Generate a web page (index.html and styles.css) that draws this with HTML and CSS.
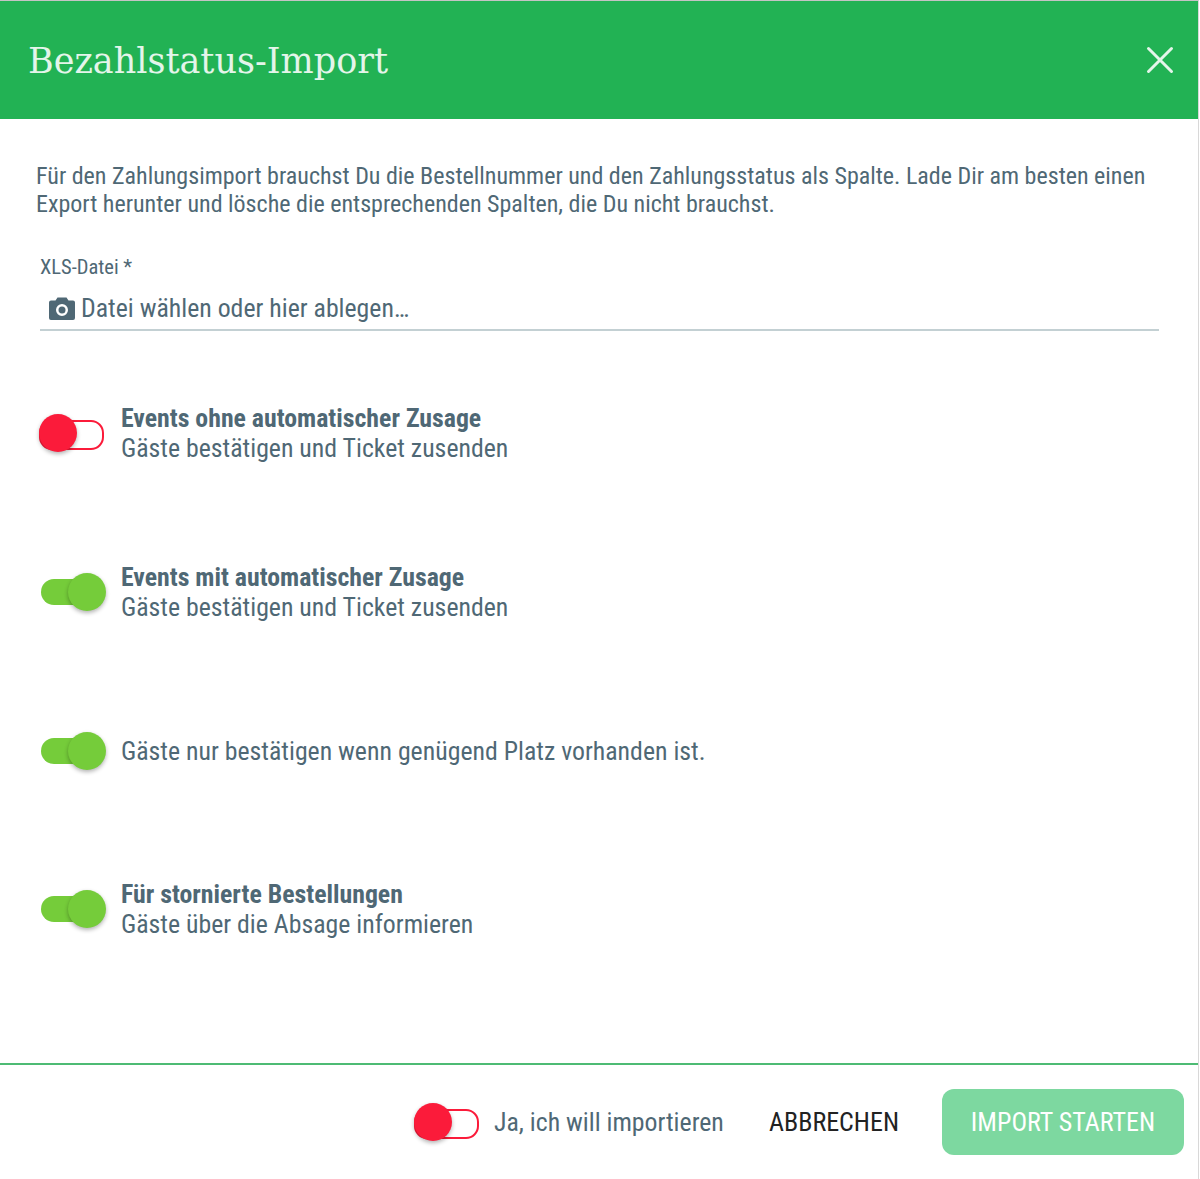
FILE: index.html
```html
<!DOCTYPE html>
<html lang="de">
<head>
  <meta charset="UTF-8">
  <meta name="viewport" content="width=device-width, initial-scale=1.0">
  <title>Bezahlstatus-Import</title>
  <link rel="stylesheet" href="styles.css">
</head>
<body>
  <div class="dialog">
    <header class="dialog-head">
      <h1>Bezahlstatus-Import</h1>
      <svg class="close" width="28" height="28" viewBox="0 0 28 28"><path d="M2.5 2.5L25.5 25.5M25.5 2.5L2.5 25.5" stroke="#e4f5ea" stroke-width="3" stroke-linecap="round"/></svg>
    </header>

    <main class="dialog-body">
      <p class="intro">Für den Zahlungsimport brauchst Du die Bestellnummer und den Zahlungsstatus als Spalte. Lade Dir am besten einen Export herunter und lösche die entsprechenden Spalten, die Du nicht brauchst.</p>

      <div class="file-field">
        <div class="file-label">XLS-Datei *</div>
        <div class="file-input">
          <svg class="camera" width="26" height="24" viewBox="0 0 26 24"><path fill-rule="evenodd" fill="#4f6875" d="M8.5 1.5h9l2 3H24a2 2 0 0 1 2 2V22a2 2 0 0 1-2 2H2a2 2 0 0 1-2-2V6.500a2 2 0 0 1 2-2h4.500zM13 8a6 6 0 1 0 0 12a6 6 0 0 0 0-12zM13 10.500a3.500 3.500 0 1 1 0 7a3.500 3.500 0 0 1 0-7z"/></svg>
          <span>Datei wählen oder hier ablegen…</span>
        </div>
      </div>

      <div class="option first">
        <span class="toggle off"><i></i></span>
        <div class="option-text"><b>Events ohne automatischer Zusage</b><span>Gäste bestätigen und Ticket zusenden</span></div>
      </div>
      <div class="option second">
        <span class="toggle on"><i></i></span>
        <div class="option-text"><b>Events mit automatischer Zusage</b><span>Gäste bestätigen und Ticket zusenden</span></div>
      </div>
      <div class="option third">
        <span class="toggle on"><i></i></span>
        <div class="option-text"><span>Gäste nur bestätigen wenn genügend Platz vorhanden ist.</span></div>
      </div>
      <div class="option fourth">
        <span class="toggle on"><i></i></span>
        <div class="option-text"><b>Für stornierte Bestellungen</b><span>Gäste über die Absage informieren</span></div>
      </div>
    </main>

    <footer class="dialog-foot">
      <span class="toggle off"><i></i></span>
      <span class="confirm">Ja, ich will importieren</span>
      <button class="btn-cancel">ABBRECHEN</button>
      <button class="btn-start">IMPORT STARTEN</button>
    </footer>
  </div>
</body>
</html>
```

FILE: styles.css
```css
* { box-sizing: border-box; }
html, body { margin: 0; padding: 0; background: #fff; }
body { font-family: Roboto, sans-serif; font-stretch: 75%; color: #4f6875; }
.dialog { width: 1199px; height: 1179px; border-right: 1px solid #d8d8d8; border-top: 1px solid #c4c4c4; display: flex; flex-direction: column; background: #fff; }

.dialog-head { height: 118px; background: #22b254; display: flex; align-items: center; justify-content: space-between; padding: 0 24px 0 28px; flex: none; }
.dialog-head h1 { margin: 2px 0 0; font-family: "DejaVu Serif", serif; font-weight: 400; font-stretch: 100%; font-size: 35px; color: #e4f5ea; }
.close { display: block; }

.dialog-body { flex: 1; padding: 0 40px; }
.intro { margin: 43px 0 0 -4px; font-size: 24px; line-height: 28px; width: 1130px; }

.file-field { margin-top: 37px; width: 1119px; border-bottom: 2px solid #c3d0d3; height: 76px; }
.file-label { font-size: 20.5px; line-height: 24px; }
.file-input { display: flex; align-items: center; gap: 6px; padding-left: 9px; margin-top: 13px; font-size: 25.8px; line-height: 32px; }
.camera { display: block; }

.option { display: flex; align-items: center; gap: 17px; }
.option .toggle { margin-left: -1px; }
.option.first { margin-top: 72px; }
.option.second { margin-top: 99px; }
.option.third { margin-top: 110px; }
.option.fourth { margin-top: 109px; }
.option-text { display: flex; flex-direction: column; font-size: 25.8px; line-height: 30px; }
.option-text b { font-weight: 700; }

.toggle { display: block; position: relative; width: 65px; height: 38px; flex: none; }
.toggle::before { content: ""; position: absolute; left: 0; right: 0; top: 6px; height: 26px; border-radius: 13px; }
.toggle i { position: absolute; top: 0; width: 38px; height: 38px; border-radius: 50%; box-shadow: 0 2px 4px rgba(0,0,0,0.3); }
.toggle.off::before { border: 2px solid #fb1b3a; background: #fff; }
.toggle.off i { left: 0; background: #fb1b3a; }
.toggle.on::before { background: #75cc3a; left: 2px; }
.toggle.on i { right: -2px; background: #75cc3a; }

.dialog-foot { height: 116px; flex: none; border-top: 2px solid #4dbb74; display: flex; align-items: center; padding: 0 14px 0 414px; }
.confirm { font-size: 25.8px; margin-left: 15px; }
.dialog-foot button { font-family: Roboto, sans-serif; font-stretch: 75%; font-size: 26px; border: 0; background: none; padding: 0; }
.btn-cancel { color: #222; margin-left: auto; }
.btn-start { width: 242px; height: 66px; margin-left: 43px; background: #7dd8a0 !important; color: #fff; border-radius: 12px; }
```
